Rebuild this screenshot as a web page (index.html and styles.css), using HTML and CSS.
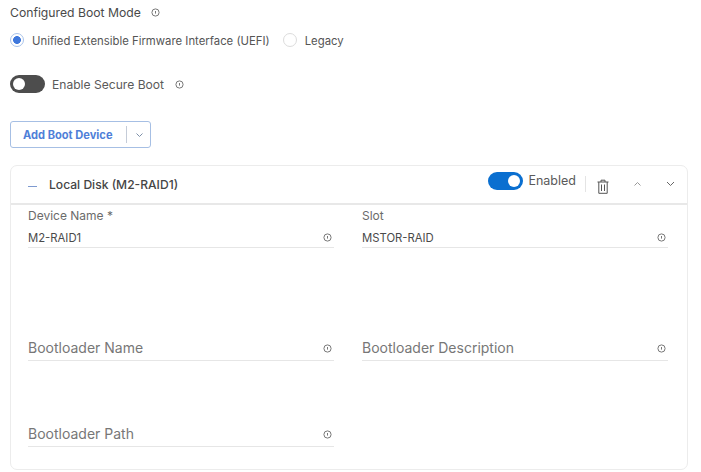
FILE: index.html
```html
<!DOCTYPE html>
<html lang="en">
<head>
<meta charset="utf-8">
<title>Boot</title>
<link rel="stylesheet" href="styles.css">
</head>
<body>
<svg class="defs" width="0" height="0"><defs>
<symbol id="info" viewBox="0 0 9 9"><circle cx="4.5" cy="4.5" r="3.6" fill="none" stroke="#777" stroke-width="1"/><path d="M4.5 3v2.6" stroke="#777" stroke-width="1"/></symbol>
</defs></svg>
<div class="page">
  <div class="title-row"><span class="title">Configured Boot Mode</span><svg class="info"><use href="#info"/></svg></div>
  <div class="radio-row">
    <span class="radio on"></span><span class="radio-label uefi">Unified Extensible Firmware Interface (UEFI)</span>
    <span class="radio"></span><span class="radio-label">Legacy</span>
  </div>
  <div class="secure-row">
    <span class="toggle off"><span class="knob"></span></span>
    <span class="secure-label">Enable Secure Boot</span><svg class="info"><use href="#info"/></svg>
  </div>
  <div class="add-btn"><span class="add-text">Add Boot Device</span><span class="add-sep"></span>
    <svg class="add-chev" width="9" height="6" viewBox="0 0 9 6"><path d="M1.5 1.5 4.5 4.5 7.5 1.5" fill="none" stroke="#7d8fa8" stroke-width="1"/></svg>
  </div>
  <section class="card">
    <header class="card-head">
      <span class="dash"></span>
      <span class="card-title">Local Disk (M2-RAID1)</span>
      <div class="head-tools">
        <span class="toggle on"><span class="knob"></span></span>
        <span class="enabled">Enabled</span>
        <span class="tool-sep"></span>
        <svg class="trash" width="12" height="15" viewBox="0 0 12 15" fill="none" stroke="#555" stroke-width="1"><path d="M.5 3h11M4 3V1.2h4V3M1.8 3v11.3h8.4V3M4.5 5.5v6.5M7.5 5.5v6.5"/></svg>
        <svg class="chev-up" width="9" height="6" viewBox="0 0 9 6"><path d="M1.5 4.5 4.5 1.5 7.5 4.5" fill="none" stroke="#999" stroke-width="1"/></svg>
        <svg class="chev-down" width="9" height="6" viewBox="0 0 9 6"><path d="M1 1 4.5 4.5 8 1" fill="none" stroke="#666" stroke-width="1"/></svg>
      </div>
    </header>
    <div class="fields">
      <div class="field filled"><label class="f-label">Device Name *</label><div class="f-line"><span class="f-value">M2-RAID1</span><svg class="info"><use href="#info"/></svg></div></div>
      <div class="field filled"><label class="f-label">Slot</label><div class="f-line"><span class="f-value">MSTOR-RAID</span><svg class="info"><use href="#info"/></svg></div></div>
      <div class="field tall"><div class="f-line"><span class="f-place">Bootloader Name</span><svg class="info"><use href="#info"/></svg></div></div>
      <div class="field tall"><div class="f-line"><span class="f-place">Bootloader Description</span><svg class="info"><use href="#info"/></svg></div></div>
      <div class="field"><div class="f-line"><span class="f-place">Bootloader Path</span><svg class="info"><use href="#info"/></svg></div></div>
    </div>
  </section>
</div>
</body>
</html>
```
FILE: styles.css
```css
* { box-sizing: border-box; }
html, body { margin: 0; padding: 0; background: #fff; }
body { width: 701px; height: 472px; overflow: hidden; font-family: Inter, "Noto Sans", sans-serif; color: #555; }
.defs { position: absolute; }
.page { padding: 4px 14px 0 10px; }
.info { width: 9px; height: 9px; flex: none; }

.title-row { display: flex; align-items: center; height: 17px; font-size: 12.2px; color: #4a4a4a; }
.title { margin-right: 10px; }

.radio-row { display: flex; align-items: center; height: 20px; margin-top: 9px; font-size: 11.35px; color: #555; }
.radio { width: 14px; height: 14px; border-radius: 50%; border: 1px solid #dcdcdc; background: #fff; flex: none; margin-right: 8px; }
.radio.on { border: 1px solid #a9c3ea; background: radial-gradient(circle, #3f78dc 0 3.6px, #fff 4.2px); }
.uefi { margin-right: 13px; }
.radio-label { padding-top: 1px; }

.secure-row { display: flex; align-items: center; height: 20px; margin-top: 24px; font-size: 12.1px; color: #5a5a5a; }
.secure-label { margin: 0 11px 0 7px; }
.toggle { display: flex; align-items: center; width: 35px; height: 18px; border-radius: 9px; padding: 3px; flex: none; }
.toggle.off { background: #4d4d4d; }
.toggle.on { background: #0a6fd0; justify-content: flex-end; }
.knob { width: 12px; height: 12px; border-radius: 50%; background: #fff; }

.add-btn { display: flex; align-items: center; width: 141px; height: 27px; margin-top: 27px; border: 1px solid #a6bfe4; border-radius: 3px; padding-left: 12px; }
.add-text { font-size: 11.1px; font-weight: 700; color: #4f7fd8; width: 103px; white-space: nowrap; }
.add-sep { width: 1px; height: 17px; background: #c5ccd8; margin-right: 8px; }

.card { width: 678px; height: 305px; margin-top: 17px; border: 1px solid #ececec; border-radius: 7px; }
.card-head { display: flex; align-items: center; height: 39px; border-bottom: 2px solid #e8e8e8; padding-left: 17px; }
.dash { width: 9px; height: 1px; background: #7e9ad0; margin-right: 12px; margin-top: 3px; }
.card-title { font-size: 12.1px; font-weight: 500; color: #454545; }
.head-tools { display: flex; align-items: center; margin-left: auto; height: 100%; padding-right: 12px; }
.head-tools .toggle { margin-top: -8px; }
.enabled { font-size: 12.5px; color: #5a5a5a; margin: -8px 0 0 5px; }
.tool-sep { width: 1px; height: 16px; background: #e4e4e4; margin: -2px 11px 0 9px; }
.trash { margin-top: 3px; }
.chev-up { margin-left: 24px; margin-top: -1px; }
.chev-down { margin-left: 24px; margin-top: -1px; }

.fields { display: grid; grid-template-columns: 306px 306px; column-gap: 28px; padding: 3px 0 0 17px; }
.field { height: 86px; display: flex; flex-direction: column; justify-content: flex-end; }
.field.tall { height: 113px; }
.field.filled { height: 40px; justify-content: flex-start; }
.f-label { font-size: 12px; line-height: 16px; color: #6b6b6b; }
.f-line { display: flex; align-items: center; justify-content: space-between; border-bottom: 1px solid #e6e6e6; padding-right: 2px; }
.filled .f-line { height: 24px; padding-top: 4px; }
.f-value { font-size: 11.3px; color: #4a4a4a; }
.f-place { font-size: 14px; color: #777; line-height: 24px; }
```
